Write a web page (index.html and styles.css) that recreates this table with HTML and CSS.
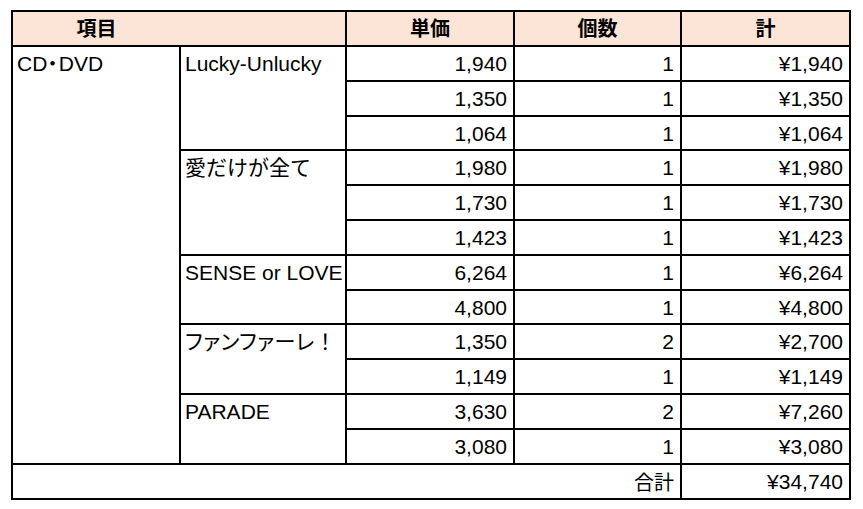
FILE: index.html
```html
<!DOCTYPE html>
<html lang="ja">
<head>
<meta charset="utf-8">
<title>CD・DVD</title>
<link rel="stylesheet" href="styles.css">
</head>
<body>
<table class="sheet">
  <colgroup>
    <col class="c1"><col class="c2"><col class="c3"><col class="c4"><col class="c5">
  </colgroup>
  <thead>
    <tr class="head">
      <th class="h-item">項目</th>
      <th class="h-blank"></th>
      <th>単価</th>
      <th>個数</th>
      <th>計</th>
    </tr>
  </thead>
  <tbody>
    <tr><td class="txt" rowspan="12">CD<span class="dot">・</span>DVD</td><td class="txt" rowspan="3">Lucky-Unlucky</td><td class="num">1,940</td><td class="num">1</td><td class="num">¥1,940</td></tr>
    <tr><td class="num">1,350</td><td class="num">1</td><td class="num">¥1,350</td></tr>
    <tr><td class="num">1,064</td><td class="num">1</td><td class="num">¥1,064</td></tr>
    <tr><td class="txt" rowspan="3">愛だけが全て</td><td class="num">1,980</td><td class="num">1</td><td class="num">¥1,980</td></tr>
    <tr><td class="num">1,730</td><td class="num">1</td><td class="num">¥1,730</td></tr>
    <tr><td class="num">1,423</td><td class="num">1</td><td class="num">¥1,423</td></tr>
    <tr><td class="txt" rowspan="2">SENSE or LOVE</td><td class="num">6,264</td><td class="num">1</td><td class="num">¥6,264</td></tr>
    <tr><td class="num">4,800</td><td class="num">1</td><td class="num">¥4,800</td></tr>
    <tr><td class="txt" rowspan="2"><span class="kana">ファンファーレ</span>！</td><td class="num">1,350</td><td class="num">2</td><td class="num">¥2,700</td></tr>
    <tr><td class="num">1,149</td><td class="num">1</td><td class="num">¥1,149</td></tr>
    <tr><td class="txt" rowspan="2">PARADE</td><td class="num">3,630</td><td class="num">2</td><td class="num">¥7,260</td></tr>
    <tr><td class="num">3,080</td><td class="num">1</td><td class="num">¥3,080</td></tr>
    <tr class="total"><td class="num jp" colspan="4">合計</td><td class="num">¥34,740</td></tr>
  </tbody>
</table>
</body>
</html>
```

FILE: styles.css
```css
html, body {
  margin: 0;
  padding: 0;
  background: #ffffff;
}
body {
  padding: 10px 0 0 11px;
  font-family: "Liberation Sans", "Noto Sans CJK JP", sans-serif;
  color: #000;
}
.sheet {
  border-collapse: collapse;
  table-layout: fixed;
  width: 838px;
  font-size: 21px;
}
.c1 { width: 168px; }
.c2 { width: 166px; }
.c3 { width: 168px; }
.c4 { width: 167px; }
.c5 { width: 169px; }
.sheet th,
.sheet td {
  border: 2px solid #000;
  padding: 3px 6px 0 5px;
  line-height: 28px;
  vertical-align: top;
  white-space: nowrap;
  overflow: hidden;
}
.sheet td.txt { padding-left: 4px; padding-right: 0; }
.dot {
  font-feature-settings: "palt" 1;
  letter-spacing: 1px;
}
.kana {
  font-feature-settings: "palt" 1;
  letter-spacing: 0.5px;
}
.head th {
  background: #fce4d6;
  font-weight: bold;
  text-align: center;
  height: 33px;
  padding: 0;
  font-family: "Noto Sans CJK JP", "Liberation Sans", sans-serif;
  font-size: 20px;
  line-height: 31px;
}
.head .h-item { border-right-style: hidden; }
.head .h-blank { border-left-style: hidden; }
.sheet tbody tr { height: 34.8px; }
.sheet .total { height: 35px; }
.txt { text-align: left; }
.num { text-align: right; }
.jp {
  font-family: "Noto Sans CJK JP", "Liberation Sans", sans-serif;
  font-size: 20px;
}
```
